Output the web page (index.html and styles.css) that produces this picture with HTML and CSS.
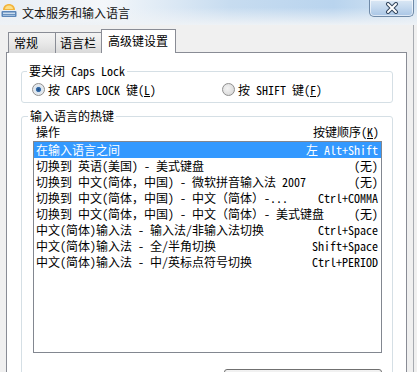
FILE: index.html
```html
<!DOCTYPE html>
<html lang="zh-CN">
<head>
    <meta charset="UTF-8">
    <title>文本服务和输入语言</title>
    <link rel="stylesheet" href="styles.css">
</head>
<body>
    <div class="window">
        <div class="titlebar">
            <svg class="app-icon" viewBox="0 0 16 16" width="16" height="16">
                <path d="M2 8 C2 4 5 2 8 2 C11 2 14 4 14 8 Z" fill="#f3b43c"/>
                <path d="M4 7 C4 5 6 3.5 8 3.5 C10 3.5 12 5 12 7 Z" fill="#fbe08a"/>
                <rect x="0.5" y="9" width="15" height="6" rx="1" fill="#5b86b8"/>
                <rect x="2" y="10.5" width="12" height="1.5" fill="#c9dcef"/>
                <rect x="2" y="12.8" width="12" height="1.2" fill="#9fbddd"/>
            </svg>
            <span class="title">文本服务和输入语言</span>
            <div class="close-btn">
                <svg viewBox="0 0 16 12" width="16" height="12">
                    <path d="M4 2 L12 10 M12 2 L4 10" stroke="#34475f" stroke-width="4" stroke-linecap="round"/>
                    <path d="M4 2 L12 10 M12 2 L4 10" stroke="#ffffff" stroke-width="2" stroke-linecap="round"/>
                </svg>
            </div>
        </div>

        <div class="client">
            <div class="tabs">
                <div class="tab tab-general">常规</div>
                <div class="tab tab-bar">语言栏</div>
                <div class="tab tab-keys active">高级键设置</div>
            </div>

            <div class="panel">
                <fieldset class="group caps-group">
                    <legend>要关闭 Caps Lock</legend>
                    <div class="radios">
                        <label class="radio-item first"><span class="radio checked"></span>按 CAPS LOCK 键(<u>L</u>)</label>
                        <label class="radio-item"><span class="radio"></span>按 SHIFT 键(<u>F</u>)</label>
                    </div>
                </fieldset>

                <fieldset class="group hotkey-group">
                    <legend>输入语言的热键</legend>
                    <div class="list-head">
                        <span>操作</span>
                        <span>按键顺序(<u>K</u>)</span>
                    </div>
                    <div class="listbox">
                        <div class="row selected"><span>在输入语言之间</span><span>左 Alt+Shift</span></div>
                        <div class="row"><span>切换到 英语(美国) - 美式键盘</span><span>(无)</span></div>
                        <div class="row"><span>切换到 中文(简体，中国) - 微软拼音输入法 2007</span><span>(无)</span></div>
                        <div class="row"><span>切换到 中文(简体，中国) - 中文（简体）-...</span><span>Ctrl+COMMA</span></div>
                        <div class="row"><span>切换到 中文(简体，中国) - 中文（简体）- 美式键盘</span><span>(无)</span></div>
                        <div class="row"><span>中文(简体)输入法 - 输入法/非输入法切换</span><span>Ctrl+Space</span></div>
                        <div class="row"><span>中文(简体)输入法 - 全/半角切换</span><span>Shift+Space</span></div>
                        <div class="row"><span>中文(简体)输入法 - 中/英标点符号切换</span><span>Ctrl+PERIOD</span></div>
                    </div>
                    <div class="btn-row">
                        <button class="btn">更改按键顺序(<u>C</u>)...</button>
                    </div>
                </fieldset>
            </div>
        </div>
    </div>
</body>
</html>
```

FILE: styles.css
```css
body {
    margin: 0;
    font-family: "Noto Sans Mono CJK SC", "Noto Sans CJK SC", monospace;
    font-size: 12px;
    color: #000;
    background: #f0f0f0;
    overflow: hidden;
}
.window {
    width: 417px;
    height: 372px;
    display: flex;
    flex-direction: column;
}

/* title bar */
.titlebar {
    height: 25px;
    display: flex;
    align-items: flex-start;
    background:
        linear-gradient(180deg, rgba(255, 255, 255, 0) 30%, #eef2f6 100%),
        linear-gradient(90deg, #e8edf3 0%, #f4f7fa 25%, #c7dcf0 55%, #b9d4ee 80%, #d6e5f3 100%);
}
.app-icon {
    margin: 2px 5px 0 1px;
}
.title {
    line-height: 25px;
    font-family: "Noto Sans CJK SC", sans-serif;
    color: #111;
}
.close-btn {
    margin-left: auto;
    margin-right: 3px;
    width: 43px;
    height: 16px;
    display: flex;
    justify-content: center;
    align-items: center;
    border: 1px solid #6f8aa8;
    border-top: none;
    border-radius: 0 0 5px 5px;
    background: linear-gradient(180deg, #dbe8f5 0%, #c3d8ee 50%, #a9c5e5 100%);
    box-shadow: inset 0 0 0 1px rgba(255, 255, 255, 0.6);
}

/* client + tabs */
.client {
    flex: 1;
    display: flex;
    flex-direction: column;
    padding: 4px 6px 0 6px;
    margin-right: 3px;
    border-right: 1px solid #a7abb1;
}
.tabs {
    display: flex;
    align-items: flex-end;
    height: 24px;
    padding-left: 2px;
    margin-bottom: -1px;
    position: relative;
    z-index: 1;
}
.tab {
    box-sizing: border-box;
    height: 21px;
    line-height: 20px;
    border: 1px solid #898c95;
    border-bottom: none;
    background: linear-gradient(180deg, #f3f3f3 0%, #e9e9e9 50%, #d9d9d9 100%);
    margin-right: -1px;
}
.tab-general { width: 48px; padding-left: 5px; }
.tab-bar { width: 47px; padding-left: 4px; }
.tab-keys { width: 75px; padding-left: 6px; }
.tab.active {
    height: 24px;
    line-height: 22px;
    background: #fff;
}

.panel {
    flex: 1;
    background: #fff;
    border: 1px solid #898c95;
    padding: 11px 13px 0 14px;
}

/* group boxes */
.group {
    margin: 0;
    border: 1px solid #d5dfe5;
    border-radius: 3px;
    padding: 4px 10px 6px 10px;
}
.group legend {
    line-height: 14px;
    padding: 0 2px;
    margin-left: -5px;
}
.radios {
    display: flex;
    height: 14px;
    align-items: center;
}
.radio-item {
    display: flex;
    align-items: center;
}
.radio-item.first {
    width: 190px;
}
.radio {
    box-sizing: border-box;
    width: 13px;
    height: 13px;
    margin-right: 3px;
    border-radius: 50%;
    border: 1px solid #8f8f8f;
    background: radial-gradient(circle at 40% 40%, #f4f4f4 0%, #dcdcdc 70%, #c9c9c9 100%);
}
.radio.checked {
    background: radial-gradient(circle, #1c4e8a 0%, #3a6ea8 28%, #d8e4f0 38%, #ececec 75%, #cfcfcf 100%);
}

.hotkey-group {
    margin-top: 6px;
    padding: 0 10px 20px 11px;
}
.list-head {
    display: flex;
    justify-content: space-between;
    height: 18px;
    line-height: 18px;
    padding: 0 3px;
}
.listbox {
    height: 210px;
    border: 1px solid #828790;
    background: #fff;
}
.row {
    display: flex;
    justify-content: space-between;
    height: 16px;
    line-height: 16px;
    padding: 0 3px 0 2px;
    white-space: nowrap;
}
.row.selected {
    background: #3399ff;
    color: #fff;
}

.btn-row {
    display: flex;
    justify-content: flex-end;
    margin-top: 16px;
}
.btn {
    box-sizing: border-box;
    width: 158px;
    height: 23px;
    padding: 8px 0 0;
    font: inherit;
    line-height: 17px;
    border: 1px solid #707070;
    border-radius: 3px;
    background: linear-gradient(180deg, #f2f2f2 0%, #ebebeb 50%, #dddddd 51%, #cfcfcf 100%);
}
```
